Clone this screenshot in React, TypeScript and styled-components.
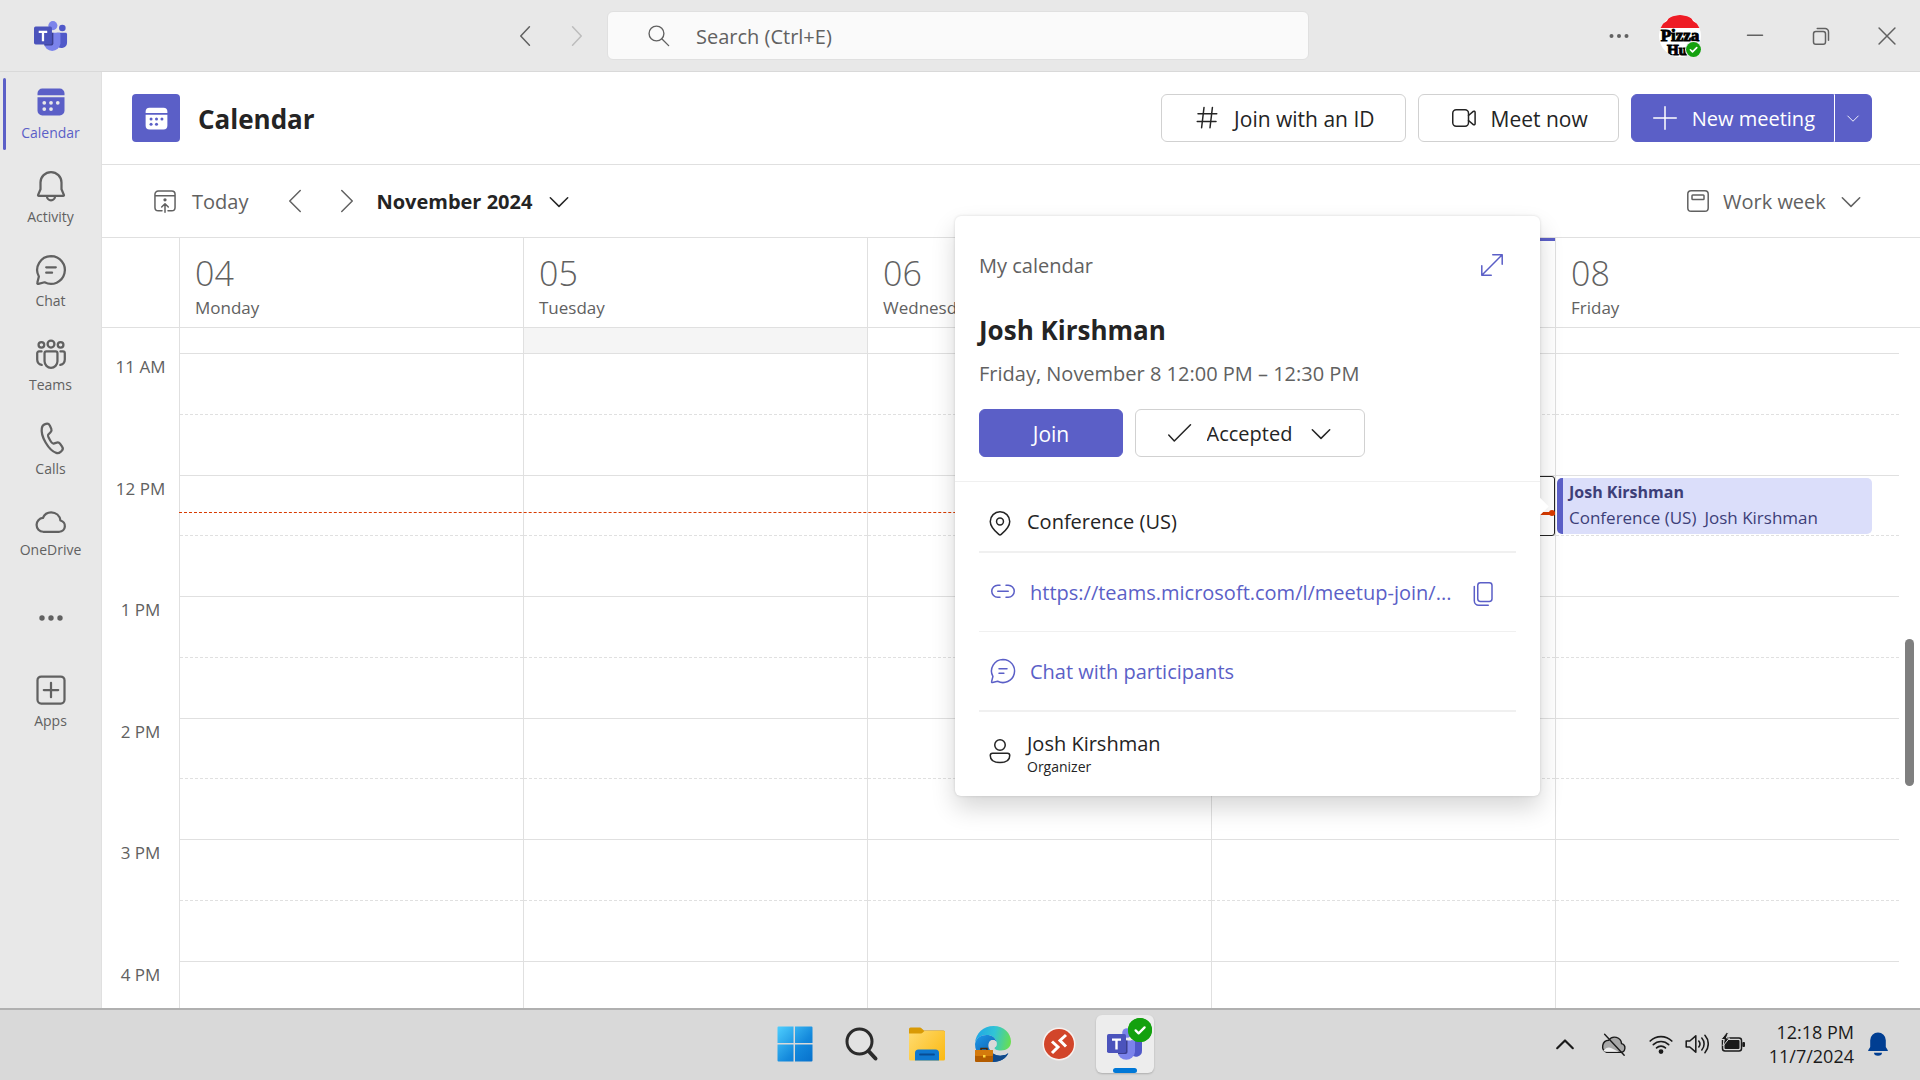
import React from "react";
import styled, { createGlobalStyle, css } from "styled-components";

const color = {
  brand: "#5b5fc7",
  text: "#242424",
  muted: "#616161",
  line: "#e0e0e0",
  chrome: "#e8e8e8",
  now: "#d83b01",
};

const Global = createGlobalStyle`
  * { box-sizing: border-box; }
  body { margin: 0; background: #fff; }
  body, button, input, select {
    font-family: "Open Sans", "Noto Sans", sans-serif;
    color: ${color.text};
  }
  button, select { cursor: pointer; }
  button, input, select { margin: 0; padding: 0; border: 0; background: none; }
  svg { display: block; flex: none; }
`;

/* ---------- shell ---------- */

const Shell = styled.div`
  display: flex;
  flex-direction: column;
  height: 100vh;
  overflow: hidden;
`;

const TitleBar = styled.header`
  display: grid;
  grid-template-columns: 1fr minmax(300px, 702px) 1fr;
  align-items: center;
  height: 72px;
  flex: none;
  padding-right: 4px;
  background: ${color.chrome};
  border-bottom: 1px solid #d9d9d9;
`;

const BarStart = styled.div`
  display: flex;
  align-items: center;
  justify-content: space-between;
  padding: 0 16px 0 34px;
`;

const BarEnd = styled.div`
  display: flex;
  align-items: center;
  justify-content: flex-end;
  padding-right: 14px;
  gap: 36px;
`;

const AccountGroup = styled.div`
  display: flex;
  align-items: center;
  gap: 25px;
  margin-right: 3px;
`;

const History = styled.div`
  display: flex;
  gap: 20px;
`;

const IconButton = styled.button<{ $color?: string }>`
  display: flex;
  align-items: center;
  justify-content: center;
  color: ${(p) => p.$color ?? color.muted};
`;

const SearchBox = styled.label`
  display: flex;
  align-items: center;
  gap: 24px;
  height: 49px;
  padding: 0 37px;
  background: #fafafa;
  border: 1px solid ${color.line};
  border-radius: 6px;
  color: ${color.muted};
`;

const SearchInput = styled.input`
  flex: 1;
  min-width: 0;
  padding-top: 2px;
  font-size: 20px;
  line-height: 28px;
  outline: none;
  &::placeholder { color: ${color.muted}; opacity: 1; }
`;

const Workspace = styled.div`
  display: flex;
  flex: 1;
  min-height: 0;
`;

/* ---------- app rail ---------- */

const Rail = styled.nav`
  display: flex;
  flex-direction: column;
  width: 102px;
  flex: none;
  background: ${color.chrome};
  border-right: 1px solid ${color.line};
`;

const RailItem = styled.button<{ $active?: boolean; $tight?: boolean }>`
  display: flex;
  flex-direction: column;
  align-items: center;
  gap: ${(p) => (p.$tight ? 0 : 3)}px;
  height: 84px;
  padding-top: 12px;
  font-size: 14px;
  line-height: 20px;
  position: relative;
  color: ${(p) => (p.$active ? color.brand : color.muted)};
  ${(p) =>
    p.$active &&
    css`
      &::before {
        content: "";
        position: absolute;
        left: 3px;
        top: 6px;
        width: 3px;
        height: 72px;
        border-radius: 2px;
        background: ${color.brand};
      }
    `}
`;

const RailMore = styled(RailItem)`
  justify-content: center;
  padding-top: 0;
`;

/* ---------- calendar page ---------- */

const Page = styled.main`
  display: flex;
  flex-direction: column;
  flex: 1;
  min-width: 0;
`;

const PageHeader = styled.div`
  display: flex;
  align-items: center;
  height: 93px;
  flex: none;
  padding: 0 48px 0 30px;
  border-bottom: 1px solid ${color.line};
`;

const AppTile = styled.div`
  display: flex;
  align-items: center;
  justify-content: center;
  width: 48px;
  height: 48px;
  border-radius: 4px;
  background: ${color.brand};
  color: #fff;
`;

const PageTitle = styled.h1`
  flex: 1;
  margin: 0 0 0 18px;
  padding-top: 2px;
  font-size: 26px;
  line-height: 36px;
  font-weight: 700;
`;

const Actions = styled.div`
  display: flex;
  gap: 12px;
`;

const Button = styled.button<{ $primary?: boolean }>`
  display: flex;
  align-items: center;
  justify-content: center;
  gap: 12px;
  height: 48px;
  padding: 0 30px;
  border-radius: 6px;
  border: 1px solid ${(p) => (p.$primary ? color.brand : "#d1d1d1")};
  background: ${(p) => (p.$primary ? color.brand : "#fff")};
  color: ${(p) => (p.$primary ? "#fff" : color.text)};
  font-size: 21px;
  line-height: 28px;
  font-weight: 500;
  white-space: nowrap;
`;

const ButtonText = styled.span`
  padding-top: 2px;
`;

const SplitButton = styled.div`
  display: flex;
`;

const SplitMain = styled(Button)`
  padding: 0 18px;
  border-radius: 6px 0 0 6px;
  font-size: 20px;
`;

const SplitMenu = styled(Button)`
  width: 38px;
  padding: 0;
  border-left-color: #fff;
  border-radius: 0 6px 6px 0;
`;

const Toolbar = styled.div`
  display: flex;
  align-items: center;
  height: 73px;
  flex: none;
  padding: 0 54px 0 48px;
  border-bottom: 1px solid ${color.line};
`;

const ToolButton = styled.button<{ $strong?: boolean }>`
  display: flex;
  align-items: center;
  gap: 12px;
  font-size: 20px;
  line-height: 28px;
  font-weight: ${(p) => (p.$strong ? 700 : 400)};
  color: ${(p) => (p.$strong ? color.text : color.muted)};
`;

const Pager = styled.div`
  display: flex;
  gap: 22px;
  margin: 0 14px 0 32px;
`;

const ViewPicker = styled.label`
  display: flex;
  align-items: center;
  gap: 10px;
  margin-left: auto;
  color: ${color.muted};
`;

const Select = styled.select<{ $strong?: boolean }>`
  appearance: none;
  outline: none;
  padding-top: 2px;
  font-size: 20px;
  line-height: 28px;
  font-weight: ${(p) => (p.$strong ? 500 : 400)};
  color: inherit;
`;

/* ---------- week board ---------- */

const Board = styled.section`
  position: relative;
  display: flex;
  flex-direction: column;
  flex: 1;
  min-height: 0;
`;

const weekColumns = css`
  display: grid;
  grid-template-columns: 77px repeat(5, 1fr) 21px;
`;

const DayHeads = styled.div`
  ${weekColumns}
  height: 90px;
  flex: none;
  border-bottom: 1px solid ${color.line};
`;

const DayHead = styled.div<{ $today?: boolean }>`
  padding: 15px 15px 0;
  border-left: 1px solid ${color.line};
  color: ${color.muted};
  box-shadow: ${(p) => (p.$today ? `inset 0 3px ${color.brand}` : "none")};
`;

const DayNumber = styled.div`
  font-size: 34px;
  line-height: 40px;
  font-weight: 300;
`;

const DayName = styled.div`
  padding-top: 1px;
  font-size: 17px;
  line-height: 28px;
`;

const Hours = styled.div`
  ${weekColumns}
  position: relative;
  flex: 1;
  min-height: 0;
  overflow: hidden;
`;

const Column = styled.div`
  display: flex;
  flex-direction: column;
  position: relative;
`;

const DayColumn = styled(Column)`
  border-left: 1px solid ${color.line};
`;

const Lead = styled.div<{ $shaded?: boolean }>`
  height: 25px;
  flex: none;
  background: ${(p) => (p.$shaded ? "#f5f5f5" : "transparent")};
`;

const hourHeight = css`
  height: 122px;
  flex: none;
  &:nth-child(odd) { height: 121px; }
`;

const Hour = styled.div`
  ${hourHeight}
  display: grid;
  grid-template-rows: 1fr 61px;
  border-top: 1px solid ${color.line};
`;

const HalfHour = styled.div`
  grid-row: 2;
  border-top: 1px dashed ${color.line};
`;

const HourLabel = styled.div`
  ${hourHeight}
  font-size: 17px;
  line-height: 27px;
  text-align: center;
  color: ${color.muted};
`;

const NowLine = styled.div`
  position: absolute;
  left: 77px;
  right: calc((100% - 98px) / 5 * 2 + 21px);
  top: 184px;
  border-top: 1px dashed ${color.now};
`;

const NowMarker = styled.div`
  position: absolute;
  left: 0;
  right: 0;
  top: 184px;
  height: 3px;
  background: ${color.now};
  &::after {
    content: "";
    position: absolute;
    right: 0;
    top: -2px;
    width: 6px;
    height: 6px;
    border-radius: 3px;
    background: ${color.now};
  }
`;

const SelectedSlot = styled.div`
  position: absolute;
  left: 0;
  right: 0;
  top: 148px;
  height: 60px;
  border: 1px solid ${color.text};
  border-radius: 3px;
`;

const EventCard = styled.button`
  position: absolute;
  left: 1px;
  right: 27px;
  top: 150px;
  height: 56px;
  padding: 1px 0 3px 6px;
  overflow: hidden;
  text-align: left;
  white-space: nowrap;
  font-size: 17px;
  line-height: 26px;
  color: #3d3e78;
  background: #dbdefa;
  border-left: 6px solid ${color.brand};
  border-radius: 5px;
`;

const EventTitle = styled.div`
  font-size: 16px;
  font-weight: 700;
`;

const EventMeta = styled.div`
  display: flex;
  gap: 8px;
`;

const ScrollTrack = styled.div`
  display: flex;
  flex-direction: column;
  padding: 311px 6px 0;
`;

const ScrollThumb = styled.div`
  height: 147px;
  border-radius: 5px;
  background: #7f7f7f;
`;

/* ---------- meeting popover ---------- */

const Popover = styled.aside`
  position: absolute;
  top: -22px;
  right: calc((100% - 98px) / 5 + 36px);
  width: 585px;
  background: #fff;
  border-radius: 6px;
  box-shadow: 0 0 3px rgba(0, 0, 0, 0.14), 0 12px 24px rgba(0, 0, 0, 0.16);
  &::after {
    content: "";
    position: absolute;
    right: -6px;
    top: 284px;
    width: 13px;
    height: 13px;
    background: #fff;
    transform: rotate(45deg);
  }
`;

const PopHead = styled.div`
  padding: 35px 24px 24px;
  border-bottom: 1px solid #f0f0f0;
`;

const PopTop = styled.div`
  display: flex;
  align-items: center;
  justify-content: space-between;
  height: 28px;
  padding-right: 9px;
  font-size: 20px;
  color: ${color.muted};
`;

const PopTitle = styled.h2`
  margin: 33px 0 12px;
  font-size: 26px;
  line-height: 36px;
  font-weight: 700;
`;

const PopTime = styled.div`
  font-size: 20px;
  line-height: 28px;
  color: ${color.muted};
`;

const PopActions = styled.div`
  display: flex;
  gap: 12px;
  margin-top: 21px;
`;

const JoinButton = styled(Button)`
  width: 144px;
`;

const Response = styled.label`
  display: flex;
  align-items: center;
  justify-content: center;
  gap: 12px;
  width: 230px;
  height: 48px;
  border: 1px solid #d1d1d1;
  border-radius: 6px;
`;

const PopRow = styled.div<{ $height: number; $rule?: number; $indent?: number }>`
  display: flex;
  align-items: center;
  gap: 12px;
  height: ${(p) => p.$height}px;
  margin: 0 24px;
  padding-left: ${(p) => p.$indent ?? 6}px;
  font-size: 20px;
  line-height: 28px;
  border-bottom: ${(p) => p.$rule ?? 0}px solid #f0f0f0;
`;

const Place = styled(PopRow)`
  padding-top: 12px;
`;

const PlaceName = styled.span`
  padding-bottom: 2px;
`;

const Organizer = styled(PopRow)`
  padding-bottom: 6px;
`;

const PopLink = styled.a`
  display: flex;
  align-items: center;
  gap: 12px;
  flex: 1;
  min-width: 0;
  color: ${color.brand};
  text-decoration: none;
  white-space: nowrap;
`;

const CopyButton = styled(IconButton)`
  padding-top: 4px;
  margin-right: 18px;
`;

const OrganizerText = styled.div`
  padding-top: 4px;
`;

const Role = styled.div`
  font-size: 14px;
  line-height: 18px;
`;

/* ---------- taskbar ---------- */

const Taskbar = styled.footer`
  display: grid;
  grid-template-columns: 1fr auto 1fr;
  align-items: center;
  height: 72px;
  flex: none;
  padding: 0 30px 2px 0;
  background: #d9d9d9;
  border-top: 2px solid #b0b0b0;
`;

const Pinned = styled.div`
  grid-column: 2;
  display: flex;
  gap: 8px;
  margin-left: 30px;
`;

const TaskButton = styled.button<{ $open?: boolean }>`
  display: flex;
  align-items: center;
  justify-content: center;
  position: relative;
  width: 58px;
  height: 58px;
  border-radius: 6px;
  background: ${(p) => (p.$open ? "#ededed" : "transparent")};
  box-shadow: ${(p) => (p.$open ? "0 1px 2px rgba(0, 0, 0, 0.2)" : "none")};
  ${(p) =>
    p.$open &&
    css`
      &::after {
        content: "";
        position: absolute;
        left: 17px;
        bottom: 0;
        width: 24px;
        height: 5px;
        border-radius: 3px;
        background: #0078d7;
      }
    `}
`;

const Badge = styled.span`
  position: absolute;
  top: 3px;
  right: 2px;
`;

const Tray = styled.div`
  display: flex;
  align-items: center;
  justify-content: flex-end;
  gap: 12px;
  color: #1b1b1b;
`;

const TraySync = styled.span`
  margin: 0 10px;
`;

const Clock = styled.time`
  margin-left: 12px;
  font-size: 18px;
  line-height: 24px;
  text-align: right;
`;

/* ---------- icons ---------- */

type IconProps = { size?: number; box?: number; w?: number; children: React.ReactNode };

const Icon = ({ size = 30, box = 20, w = 1, children }: IconProps) => (
  <svg
    width={size}
    height={size}
    viewBox={`0 0 ${box} ${box}`}
    fill="none"
    stroke="currentColor"
    strokeWidth={w}
    strokeLinecap="round"
    strokeLinejoin="round"
    aria-hidden="true"
  >
    {children}
  </svg>
);

const RailIcon = ({ children }: { children: React.ReactNode }) => (
  <Icon size={36} box={24} w={1.5}>{children}</Icon>
);

const ChevronLeft = () => <Icon><path d="M12.3 3.8 6.5 10l5.8 6.2" /></Icon>;
const ChevronRight = () => <Icon><path d="M7.7 3.8 13.5 10l-5.8 6.2" /></Icon>;
const PageLeft = () => <Icon><path d="M13.5 3 6.5 10l7 7" /></Icon>;
const PageRight = () => <Icon><path d="m6.5 3 7 7-7 7" /></Icon>;
const ChevronDown = ({ size = 30 }: { size?: number }) => (
  <Icon size={size}><path d="m4.2 7.8 5.8 5.8 5.8-5.8" /></Icon>
);

const CalendarGlyph = ({ size, dots }: { size: number; dots: string }) => (
  <svg width={size} height={size} viewBox="0 0 24 24" aria-hidden="true">
    <path fill="currentColor" d="M3 7.5V6.2A3.2 3.2 0 0 1 6.200 3h11.600A3.200 3.200 0 0 1 21 6.200V7.500ZM3 8.900h18v8.900a3.200 3.200 0 0 1-3.200 3.200H6.200A3.200 3.200 0 0 1 3 17.800Z" />
    <g fill={dots}>
      <circle cx="7.500" cy="12.500" r="1.250" />
      <circle cx="12" cy="12.500" r="1.250" />
      <circle cx="16.500" cy="12.500" r="1.250" />
      <circle cx="7.500" cy="16.700" r="1.250" />
      <circle cx="12" cy="16.700" r="1.250" />
    </g>
  </svg>
);

const BubblePath = () => (
  <path d="M12 2.750a9.250 9.250 0 1 1-4.300 17.440l-4.100 1.050a.6.600 0 0 1-.74-.74l1.060-4.120A9.250 9.250 0 0 1 12 2.750ZM8.800 10.200h6.400M8.800 13.800h3.900" />
);

const Dots = ({ size, r }: { size: number; r: number }) => (
  <svg width={size} height={size} viewBox="0 0 24 24" fill="currentColor" aria-hidden="true">
    <circle cx="6" cy="12" r={r} />
    <circle cx="12" cy="12" r={r} />
    <circle cx="18" cy="12" r={r} />
  </svg>
);

const TeamsLogo = ({ size }: { size: number }) => (
  <svg width={size} height={size} viewBox="0 0 36 36" aria-hidden="true">
    <circle cx="30" cy="9.500" r="3.500" fill="#5059c9" />
    <path d="M24 14.500h9.500c.8 0 1.500.7 1.500 1.500v8.500a6 6 0 0 1-11 3.500Z" fill="#5059c9" />
    <circle cx="20" cy="7" r="4.800" fill="#7b83eb" />
    <path d="M10.500 14.500h16c1 0 1.500.7 1.500 1.500v10a8.800 8.800 0 0 1-17.500 0Z" fill="#7b83eb" />
    <path d="M11 14.500h9.500V26a2 2 0 0 1-2 2H11Z" fill="#3b3f8f" />
    <rect x="0" y="8" width="19" height="19" rx="1.800" fill="#4b53bc" />
    <path d="M5 12.500h9v2.200h-3.300v8.800H8.300v-8.800H5Z" fill="#fff" />
  </svg>
);

const CheckBadge = ({ size, ring }: { size: number; ring?: string }) => (
  <svg width={size} height={size} viewBox="0 0 24 24" aria-hidden="true">
    <circle cx="12" cy="12" r="12" fill={ring ?? "#13a10e"} />
    <circle cx="12" cy="12" r={ring ? 10.500 : 12} fill="#13a10e" />
    <path d="m7.600 12.400 3 3 6-6" stroke="#fff" strokeWidth="2.300" fill="none" strokeLinecap="round" strokeLinejoin="round" />
  </svg>
);

const Avatar = styled.button`
  position: relative;
  width: 42px;
  height: 42px;
`;

const Presence = styled.span`
  position: absolute;
  right: -1px;
  bottom: -1px;
`;

const AvatarArt = () => (
  <svg width="42" height="42" viewBox="0 0 42 42" aria-hidden="true">
    <defs>
      <clipPath id="avatar"><circle cx="21" cy="21" r="21" /></clipPath>
    </defs>
    <g clipPath="url(#avatar)">
      <rect width="42" height="42" fill="#fff" />
      <path d="M0 13C3 7 8 8 9 4 11 1 15 0 21 0s10 1 12 4c1 4 6 3 9 9Z" fill="#ee1c25" />
      <text x="21" y="26" textAnchor="middle" fontFamily="Liberation Serif, serif" fontWeight="700" fontSize="17" stroke="#000" strokeWidth="1">Pizza</text>
      <text x="8" y="40" fontFamily="Liberation Serif, serif" fontWeight="700" fontSize="15" stroke="#000" strokeWidth="1">Hut</text>
    </g>
  </svg>
);

const WindowsLogo = () => (
  <svg width="36" height="36" viewBox="0 0 36 36" aria-hidden="true">
    <defs>
      <linearGradient id="win" x1="0" y1="0" x2="36" y2="36" gradientUnits="userSpaceOnUse">
        <stop stopColor="#4fd0ff" /><stop offset=".6" stopColor="#1489dc" /><stop offset="1" stopColor="#0670cc" />
      </linearGradient>
    </defs>
    <path fill="url(#win)" d="M1.500.5h15v16.500H.5V1.500a1 1 0 0 1 1-1ZM18 .5h16.500a1 1 0 0 1 1 1V17H18ZM.5 18.500h16v17h-15a1 1 0 0 1-1-1ZM18 18.500h17.500v16a1 1 0 0 1-1 1H18Z" />
  </svg>
);

const TaskSearch = () => (
  <svg width="36" height="36" viewBox="0 0 36 36" fill="none" stroke="#2b2b2b" aria-hidden="true">
    <circle cx="16.500" cy="15.500" r="12.500" strokeWidth="3" fill="#e2e2e2" />
    <path d="m26 25.500 6.500 7" strokeWidth="4" strokeLinecap="round" />
  </svg>
);

const FolderIcon = () => (
  <svg width="36" height="36" viewBox="0 0 36 36" aria-hidden="true">
    <defs>
      <linearGradient id="folder" x1="0" y1="4" x2="36" y2="34" gradientUnits="userSpaceOnUse">
        <stop stopColor="#ffdc72" /><stop offset="1" stopColor="#fbb912" />
      </linearGradient>
    </defs>
    <path d="M0 3a1.500 1.500 0 0 1 1.500-1.500h9c1 0 1.500.3 2.200 1L15 4.500h19.500A1.500 1.500 0 0 1 36 6v6H0Z" fill="#d99a05" />
    <path d="M0 7.500h11.500c1 0 1.600-.3 2.300-1L15.500 5H35a1 1 0 0 1 1 1v27a1.500 1.500 0 0 1-1.500 1.500h-33A1.500 1.500 0 0 1 0 33Z" fill="url(#folder)" />
    <path d="M6 34.500V27a3.500 3.500 0 0 1 3.500-3.500h17A3.500 3.500 0 0 1 30 27v7.500Z" fill="#0f78d0" />
    <path d="M11 28.500h14" stroke="#094c93" strokeWidth="1.800" strokeLinecap="round" />
  </svg>
);

const EdgeIcon = () => (
  <svg width="36" height="36" viewBox="0 0 36 36" aria-hidden="true">
    <defs>
      <linearGradient id="edgeTop" x1="0" y1="10" x2="36" y2="18" gradientUnits="userSpaceOnUse">
        <stop stopColor="#1fa6e6" /><stop offset=".5" stopColor="#31c4d6" /><stop offset="1" stopColor="#6be04a" />
      </linearGradient>
      <linearGradient id="edgeBody" x1="4" y1="12" x2="20" y2="32" gradientUnits="userSpaceOnUse">
        <stop stopColor="#1b8fe0" /><stop offset="1" stopColor="#0b58a8" />
      </linearGradient>
    </defs>
    <path d="M0 17C.8 7 8.500 0 18.500 0 29 0 36 7.500 36 15.500c0 6-4.500 9-10 9-4.500 0-6.500-1.600-6.500-2.600 0-.9 2-1.700 2-4.700C21.500 12 17 9 11.500 9 6 9 1.500 12 0 17Z" fill="url(#edgeTop)" />
    <path d="M0 18C1 12 6 9 11.500 9c5 0 9 2.600 9.900 6.600-1-1.600-3-2-4.700-1.500-2.700.8-4.200 4.400-2.700 8.400 2 5.300 8 8 13 7 2.800-.5 5-1.700 6.300-2.300C31 32 25.500 36 18 36 8 36 0 28 0 18Z" fill="url(#edgeBody)" />
    <path d="M14 22.500c2 5 8 7.800 13 7 2.800-.5 5-1.700 6.300-2.300C31 32 25.500 36 18 36Z" fill="#114a8b" />
    <circle cx="18" cy="18" r="3.800" fill="#d9d9d9" />
    <path d="M17 21.500c3 4 9 6 16 5l-2 2c-6 2-13-1-14-7Z" fill="#d9d9d9" />
    <path d="M6 24v-1.500h6V24" stroke="#4a2500" strokeWidth="1.500" fill="none" />
    <rect x="0" y="24" width="18" height="12" rx="1" fill="#b35c00" />
    <rect x="0" y="24" width="18" height="6" rx="1" fill="#d47a0c" />
    <rect x="8" y="29" width="2.500" height="2.500" fill="#ffd83b" />
  </svg>
);

const RemoteIcon = () => (
  <svg width="34" height="34" viewBox="0 0 34 34" aria-hidden="true">
    <circle cx="17" cy="17" r="16.500" fill="#f7f1ef" />
    <circle cx="17" cy="17" r="15" fill="#d2452a" />
    <path d="m10 14.500 6 5.500-6 6M24 8l-6 5.500 6 6" stroke="#fff" strokeWidth="3" fill="none" />
  </svg>
);

/* ---------- data ---------- */

const days = [
  { date: "04", name: "Monday" },
  { date: "05", name: "Tuesday", shaded: true },
  { date: "06", name: "Wednesday" },
  { date: "", name: "", today: true },
  { date: "08", name: "Friday", event: true },
];

const hours = ["11 AM", "12 PM", "1 PM", "2 PM", "3 PM", "4 PM"];

const railItems = [
  { label: "Calendar", active: true, icon: <CalendarGlyph size={36} dots="#e8e8e8" /> },
  {
    label: "Activity",
    icon: (
      <RailIcon>
        <path d="M12 2.700a7 7 0 0 1 7 7v4.500l1.600 3.700a.5.500 0 0 1-.5.700H3.900a.5.500 0 0 1-.5-.7L5 14.200V9.700a7 7 0 0 1 7-7ZM9.300 18.800a2.700 2.700 0 0 0 5.400 0" />
      </RailIcon>
    ),
  },
  { label: "Chat", icon: <RailIcon><BubblePath /></RailIcon> },
  {
    label: "Teams",
    icon: (
      <RailIcon>
        <circle cx="12" cy="5.400" r="2.300" />
        <circle cx="5.600" cy="5.900" r="1.900" />
        <circle cx="18.400" cy="5.900" r="1.900" />
        <path d="M8.900 10.300h6.200c.7 0 1.200.5 1.200 1.200v5.400a4.300 4.300 0 0 1-8.600 0v-5.400c0-.7.5-1.200 1.200-1.200ZM5.700 10.300H4c-.7 0-1.200.5-1.200 1.200v4.200a3.700 3.700 0 0 0 3 3.600M18.300 10.300H20c.7 0 1.200.5 1.200 1.200v4.200a3.700 3.700 0 0 1-3 3.600" />
      </RailIcon>
    ),
  },
  {
    label: "Calls",
    icon: (
      <RailIcon>
        <path d="m7.700 2.900 1-.3c1-.3 2 .2 2.500 1.100l1 2.200c.3.800.1 1.700-.5 2.300l-1.500 1.500c-.4.400 0 1.800 1 3.500s2 2.600 2.500 2.500l2.100-.6c.8-.3 1.700 0 2.200.7l1.400 2c.6.800.5 2-.2 2.700l-.8.700c-.8.700-1.900 1-2.900.7-2.600-.8-5-3.300-7.100-6.900-2.100-3.600-3-6.900-2.500-9.600.2-1.200.9-2.200 1.800-2.500Z" />
      </RailIcon>
    ),
  },
  {
    label: "OneDrive",
    tight: true,
    icon: (
      <RailIcon>
        <path d="M6.800 18.500h10.800a3.800 3.800 0 0 0 .7-7.500c-.5-3.200-3-5.400-6.200-5.400-2.500 0-4.500 1.300-5.500 3.700-2.400.2-4.200 2.200-4.200 4.600a4.500 4.500 0 0 0 4.400 4.600Z" />
      </RailIcon>
    ),
  },
];

export default function App() {
  return (
    <Shell>
      <Global />
      <TitleBar>
        <BarStart>
          <TeamsLogo size={34} />
          <History>
            <IconButton aria-label="Back"><ChevronLeft /></IconButton>
            <IconButton aria-label="Forward" $color="#bdbdbd"><ChevronRight /></IconButton>
          </History>
        </BarStart>
        <SearchBox>
          <Icon size={27}><circle cx="8.500" cy="8.500" r="5.500" /><path d="m12.600 12.600 4.900 4.900" /></Icon>
          <SearchInput type="text" placeholder="Search (Ctrl+E)" aria-label="Search" />
        </SearchBox>
        <BarEnd>
          <AccountGroup>
            <IconButton aria-label="More options"><Dots size={30} r={1.6} /></IconButton>
            <Avatar aria-label="Account">
              <AvatarArt />
              <Presence><CheckBadge size={17} ring="#e8e8e8" /></Presence>
            </Avatar>
          </AccountGroup>
          <IconButton aria-label="Minimize"><Icon><path d="M5 9.500h10" /></Icon></IconButton>
          <IconButton aria-label="Restore">
            <Icon><rect x="5" y="7" width="8" height="8.500" rx="1.500" /><path d="M7.500 5h5.200A2.300 2.300 0 0 1 15 7.300v5.500" /></Icon>
          </IconButton>
          <IconButton aria-label="Close"><Icon><path d="m4.700 4.700 10.600 10.600M15.300 4.700 4.700 15.300" /></Icon></IconButton>
        </BarEnd>
      </TitleBar>

      <Workspace>
        <Rail aria-label="Apps">
          {railItems.map((item) => (
            <RailItem key={item.label} $active={item.active} $tight={item.tight}>
              {item.icon}
              {item.label}
            </RailItem>
          ))}
          <RailMore aria-label="More apps"><Dots size={36} r={1.8} /></RailMore>
          <RailItem>
            <RailIcon><rect x="3" y="3" width="18" height="18" rx="2.500" /><path d="M12 7.200v9.600M7.200 12h9.600" /></RailIcon>
            Apps
          </RailItem>
        </Rail>

        <Page>
          <PageHeader>
            <AppTile><CalendarGlyph size={29} dots={color.brand} /></AppTile>
            <PageTitle>Calendar</PageTitle>
            <Actions>
              <Button>
                <Icon><path d="M8 3 6.400 16.500M13.600 3 12 16.500M4 7.200h12.500M3.500 12.300H16" /></Icon>
                <ButtonText>Join with an ID</ButtonText>
              </Button>
              <Button>
                <Icon><rect x="2.500" y="4.500" width="10.500" height="11" rx="2.300" /><path d="m13 8.300 3.200-2.700c.5-.4 1.200 0 1.200.6v7.600c0 .6-.7 1-1.200.6L13 11.700" /></Icon>
                <ButtonText>Meet now</ButtonText>
              </Button>
              <SplitButton>
                <SplitMain $primary>
                  <Icon><path d="M10 2.500v15M2.500 10h15" /></Icon>
                  <ButtonText>New meeting</ButtonText>
                </SplitMain>
                <SplitMenu $primary aria-label="New meeting options"><ChevronDown size={18} /></SplitMenu>
              </SplitButton>
            </Actions>
          </PageHeader>

          <Toolbar>
            <ToolButton>
              <Icon>
                <path d="M8 16.500H5.500a2.200 2.200 0 0 1-2.200-2.200V5.500a2.200 2.200 0 0 1 2.200-2.200h9a2.200 2.200 0 0 1 2.200 2.200v8.800a2.200 2.200 0 0 1-2.200 2.200H12M3.300 6.500h13.400M10 17.500v-5.200M7.800 14l2.200-2.200 2.200 2.200" />
                <circle cx="10" cy="9.200" r=".6" fill="currentColor" />
              </Icon>
              <ButtonText>Today</ButtonText>
            </ToolButton>
            <Pager>
              <IconButton aria-label="Previous week"><PageLeft /></IconButton>
              <IconButton aria-label="Next week"><PageRight /></IconButton>
            </Pager>
            <ToolButton $strong><ButtonText>November 2024</ButtonText><ChevronDown /></ToolButton>
            <ViewPicker>
              <Icon><rect x="3.200" y="3.200" width="13.600" height="13.600" rx="2.200" /><rect x="6" y="6" width="8" height="3" rx=".5" /></Icon>
              <Select aria-label="View" defaultValue="Work week">
                <option>Work week</option>
                <option>Week</option>
                <option>Day</option>
              </Select>
              <ChevronDown />
            </ViewPicker>
          </Toolbar>

          <Board>
            <DayHeads>
              <div />
              {days.map((day, i) => (
                <DayHead key={i} $today={day.today}>
                  <DayNumber>{day.date}</DayNumber>
                  <DayName>{day.name}</DayName>
                </DayHead>
              ))}
            </DayHeads>
            <Hours>
              <Column>
                <Lead />
                {hours.map((hour) => <HourLabel key={hour}>{hour}</HourLabel>)}
              </Column>
              {days.map((day, i) => (
                <DayColumn key={i}>
                  <Lead $shaded={day.shaded} />
                  {hours.map((hour) => <Hour key={hour}><HalfHour /></Hour>)}
                  {day.today && <><SelectedSlot /><NowMarker /></>}
                  {day.event && (
                    <EventCard>
                      <EventTitle>Josh Kirshman</EventTitle>
                      <EventMeta><span>Conference (US)</span><span>Josh Kirshman</span></EventMeta>
                    </EventCard>
                  )}
                </DayColumn>
              ))}
              <ScrollTrack><ScrollThumb /></ScrollTrack>
              <NowLine />
            </Hours>

            <Popover aria-label="Meeting details">
              <PopHead>
                <PopTop>
                  My calendar
                  <IconButton aria-label="Expand" $color={color.brand}>
                    <Icon><path d="M3.200 16.800 16.800 3.200M10.500 3.200h6.300v6.300M3.200 10.500v6.300h6.300" /></Icon>
                  </IconButton>
                </PopTop>
                <PopTitle>Josh Kirshman</PopTitle>
                <PopTime>Friday, November 8 12:00 PM – 12:30 PM</PopTime>
                <PopActions>
                  <JoinButton $primary><ButtonText>Join</ButtonText></JoinButton>
                  <Response>
                    <Icon><path d="m2.500 11.300 3.700 4L17 4.500" /></Icon>
                    <Select $strong aria-label="Response" defaultValue="Accepted">
                      <option>Accepted</option>
                      <option>Tentative</option>
                      <option>Decline</option>
                    </Select>
                    <ChevronDown />
                  </Response>
                </PopActions>
              </PopHead>
              <Place $height={71} $rule={2}>
                <Icon><path d="M10 2.500a6.500 6.500 0 0 1 6.500 6.500c0 2.800-2 5.500-5.700 8.600a1.200 1.200 0 0 1-1.600 0C5.500 14.500 3.500 11.800 3.500 9A6.500 6.500 0 0 1 10 2.500Z" /><circle cx="10" cy="9" r="2.300" /></Icon>
                <PlaceName>Conference (US)</PlaceName>
              </Place>
              <PopRow $height={79} $rule={1} $indent={9}>
                <PopLink href="#meeting">
                  <Icon><path d="M8 5.500H6.500a4 4 0 0 0 0 8H8M12 5.500h1.500a4 4 0 0 1 0 8H12M6.500 9.500h7" /></Icon>
                  <ButtonText>https://teams.microsoft.com/l/meetup-join/...</ButtonText>
                </PopLink>
                <CopyButton aria-label="Copy link" $color={color.brand}>
                  <Icon><rect x="6.500" y="2.500" width="9.500" height="12.500" rx="1.800" /><path d="M4.200 5v9.500a3 3 0 0 0 3 3h6.300" /></Icon>
                </CopyButton>
              </PopRow>
              <PopRow $height={80} $rule={2} $indent={9}>
                <PopLink href="#chat">
                  <Icon box={24} w={1.2}><BubblePath /></Icon>
                  <ButtonText>Chat with participants</ButtonText>
                </PopLink>
              </PopRow>
              <Organizer $height={84}>
                <Icon><circle cx="10" cy="6" r="3.500" /><path d="M5 11.500h10c.8 0 1.500.7 1.500 1.500 0 3-2.600 4.700-6.500 4.700S3.500 16 3.500 13c0-.8.7-1.500 1.500-1.500Z" /></Icon>
                <OrganizerText>
                  <div>Josh Kirshman</div>
                  <Role>Organizer</Role>
                </OrganizerText>
              </Organizer>
            </Popover>
          </Board>
        </Page>
      </Workspace>

      <Taskbar>
        <Pinned>
          <TaskButton aria-label="Start"><WindowsLogo /></TaskButton>
          <TaskButton aria-label="Search"><TaskSearch /></TaskButton>
          <TaskButton aria-label="File Explorer"><FolderIcon /></TaskButton>
          <TaskButton aria-label="Edge"><EdgeIcon /></TaskButton>
          <TaskButton aria-label="Remote Desktop"><RemoteIcon /></TaskButton>
          <TaskButton $open aria-label="Teams">
            <TeamsLogo size={36} />
            <Badge><CheckBadge size={24} /></Badge>
          </TaskButton>
        </Pinned>
        <Tray>
          <Icon size={24} w={1.8}><path d="m3.500 13.500 6.500-6.500 6.500 6.500" /></Icon>
          <TraySync>
            <Icon size={28}>
              <path d="M5.500 16h9.800a3.200 3.200 0 0 0 .8-6.300A5 5 0 0 0 7 7.300 4.500 4.500 0 0 0 5.500 16Z" fill="#a8a8a8" />
              <path d="M3 15c2-2.500 4-3 6-2l5 2.500H5.500A4 4 0 0 1 3 15Z" fill="#efefef" stroke="none" />
              <path d="m4 3 14 15" />
            </Icon>
          </TraySync>
          <Icon size={24} w={1.4}>
            <path d="M1 7.500a12.800 12.800 0 0 1 18 0M3.600 10.500a9.200 9.200 0 0 1 12.800 0M6.300 13.300a5.400 5.400 0 0 1 7.400 0" />
            <circle cx="10" cy="16.300" r="1.300" fill="currentColor" />
          </Icon>
          <Icon size={24} w={1.3}>
            <path d="M1 7.500h3l5-4.300v13.600l-5-4.300H1ZM11.500 7.500a4 4 0 0 1 0 5M14 5a7.500 7.500 0 0 1 0 10M16.600 2.700a11 11 0 0 1 0 14.600" />
          </Icon>
          <svg width="24" height="24" viewBox="0 0 24 24" aria-hidden="true">
            <rect x="1.500" y="6" width="19" height="13" rx="2.500" fill="none" stroke="#1b1b1b" strokeWidth="1.500" />
            <rect x="3.500" y="8" width="15" height="9" rx="1" fill="#1b1b1b" />
            <rect x="21.300" y="10" width="2.700" height="5" rx="1" fill="#1b1b1b" />
            <path d="M5.500.5 0 7.500h3.300L2 14l6.500-8H5.400L7.500.5Z" fill="#1b1b1b" stroke="#d9d9d9" strokeWidth="1" />
          </svg>
          <Clock>12:18 PM<br />11/7/2024</Clock>
          <svg width="24" height="24" viewBox="0 0 24 24" fill="#003e92" aria-hidden="true">
            <path d="M12 .5a7.800 7.800 0 0 1 7.800 7.800V15l2 3.300v.7H2.200v-.7l2-3.300V8.300A7.800 7.800 0 0 1 12 .5ZM8 20.700h8a4 3 0 0 1-8 0Z" />
          </svg>
        </Tray>
      </Taskbar>
    </Shell>
  );
}
